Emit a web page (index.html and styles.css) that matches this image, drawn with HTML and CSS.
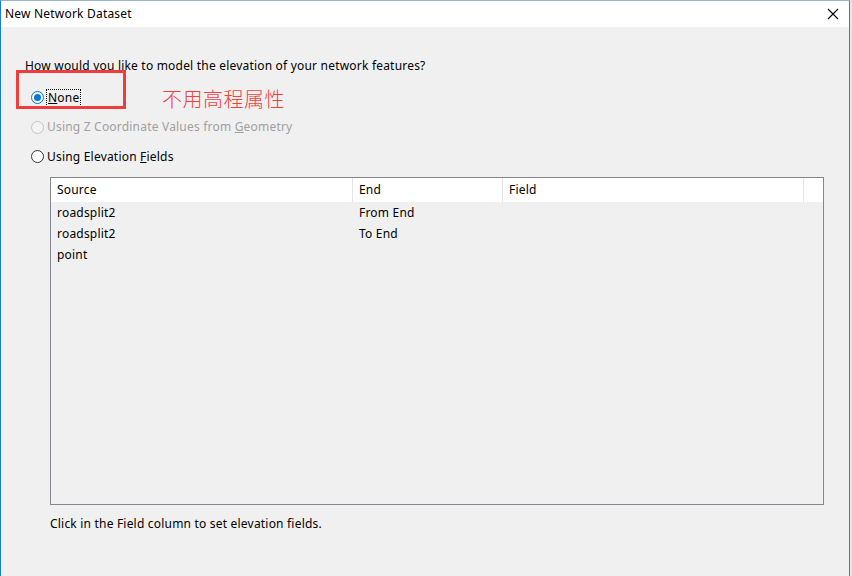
FILE: index.html
```html
<!DOCTYPE html>
<html>
<head>
	<title>New Network Dataset</title>
	<link rel="stylesheet" href="styles.css">
</head>
<body>
	<div class="window">
		<div class="titlebar">
			<span class="title">New Network Dataset</span>
			<svg class="close" width="12" height="12" viewBox="0 0 12 12">
				<path d="M1 1 L11 11 M11 1 L1 11" stroke="#000" stroke-width="1.1" fill="none"/>
			</svg>
		</div>
		<div class="content">
			<div class="question">How would you like to model the elevation of your network features?</div>

			<div class="options">
				<label class="option">
					<span class="radio checked"></span>
					<span class="focus"><u>N</u>one</span>
				</label>
				<label class="option disabled">
					<span class="radio"></span>
					<span>Using Z Coordinate Values from <u>G</u>eometry</span>
				</label>
				<label class="option">
					<span class="radio"></span>
					<span>Using Elevation <u>F</u>ields</span>
				</label>
			</div>

			<div class="grid">
				<div class="grid-head">
					<div class="col col-source">Source</div>
					<div class="col col-end">End</div>
					<div class="col col-field">Field</div>
					<div class="col col-fill"></div>
				</div>
				<div class="grid-row">
					<div class="col col-source">roadsplit2</div>
					<div class="col col-end">From End</div>
					<div class="col col-field"></div>
				</div>
				<div class="grid-row">
					<div class="col col-source">roadsplit2</div>
					<div class="col col-end">To End</div>
					<div class="col col-field"></div>
				</div>
				<div class="grid-row">
					<div class="col col-source">point</div>
					<div class="col col-end"></div>
					<div class="col col-field"></div>
				</div>
			</div>

			<div class="hint">Click in the Field column to set elevation fields.</div>
		</div>

		<!-- annotation drawn over the dialog -->
		<div class="mark-box"></div>
		<div class="mark-text">不用高程属性</div>
	</div>
</body>
</html>
```

FILE: styles.css
```css
body {
    margin: 0;
    background: #e8e8e8;
    font-family: "Noto Sans", "Liberation Sans", sans-serif;
    font-size: 12px;
    letter-spacing: 0.2px;
    color: #000;
}

.window {
    position: relative;
    width: 850px;
    height: 576px;
    box-sizing: border-box;
    border-left: 1px solid #1a7ad6;
    border-right: 1px solid #3c7fc0;
    border-top: 1px solid #9ab6d3;
    background: #f0f0f0;
    overflow: hidden;
}

.titlebar {
    display: flex;
    align-items: center;
    justify-content: space-between;
    height: 26px;
    background: #fff;
}

.title {
    padding-left: 4px;
    line-height: 16px;
}

.close {
    margin-right: 10px;
}

.content {
    padding: 31px 0 0 24px;
}

.question {
    line-height: 16px;
}

.options {
    display: flex;
    flex-direction: column;
    margin-top: 9px;
    margin-left: 6px;
}

.option {
    display: flex;
    align-items: center;
    height: 29.5px;
    line-height: 16px;
}

.option.disabled {
    color: #a0a0a0;
}

.radio {
    width: 11px;
    height: 11px;
    border: 1px solid #333;
    border-radius: 50%;
    margin-right: 3px;
    background: #fff;
    flex-shrink: 0;
    position: relative;
}

.disabled .radio {
    border-color: #c4c4c4;
    background: #f4f4f4;
}

.radio.checked {
    border-color: #0078d7;
}

.radio.checked::after {
    content: "";
    position: absolute;
    left: 2px;
    top: 2px;
    width: 7px;
    height: 7px;
    border-radius: 50%;
    background: #0078d7;
}

.focus {
    outline: 1px dotted #000;
    outline-offset: 0;
    padding: 0 1px;
}

.grid {
    margin: 5px 0 0 25px;
    width: 774px;
    height: 328px;
    box-sizing: border-box;
    border: 1px solid #828790;
    background: #f0f0f0;
}

.grid-head {
    display: flex;
    height: 24px;
    background: #fff;
}

.grid-head .col {
    border-right: 1px solid #e5e5e5;
}

.grid-row {
    display: flex;
    height: 21px;
}

.col {
    box-sizing: border-box;
    display: flex;
    align-items: center;
    padding-left: 6px;
}

.col-source {
    width: 302px;
}

.col-end {
    width: 150px;
}

.col-field {
    width: 301px;
}

.col-fill {
    flex: 1;
    border-right: none !important;
}

.hint {
    margin: 11px 0 0 25px;
    line-height: 16px;
}

.mark-box {
    position: absolute;
    left: 15px;
    top: 69px;
    width: 110px;
    height: 39px;
    box-sizing: border-box;
    border: 3px solid #f03c3c;
}

.mark-text {
    position: absolute;
    left: 161px;
    top: 84px;
    color: #f04040;
    font-family: "Noto Sans CJK SC", sans-serif;
    font-size: 20px;
    font-weight: 300;
    line-height: 28px;
    letter-spacing: 0.5px;
}
```
